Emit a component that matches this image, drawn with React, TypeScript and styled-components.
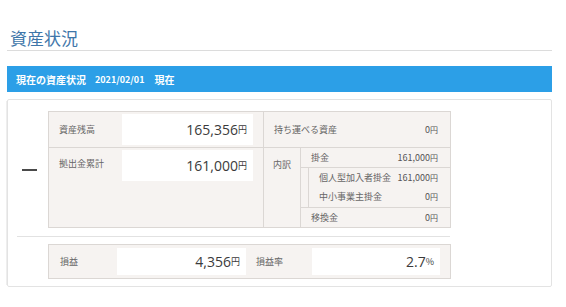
import * as React from "react"
import styled, { createGlobalStyle } from "styled-components"

const GlobalStyle = createGlobalStyle`
  body {
    margin: 0;
    background: #fff;
    font-family: "Noto Sans CJK JP", "Noto Sans", sans-serif;
  }
`

const Page = styled.div`
  width: 545px;
  padding: 26px 0 0 7px;
`

const Title = styled.h1`
  margin: 0 0 15px;
  padding-left: 3px;
  font-size: 17px;
  font-weight: normal;
  line-height: 24px;
  color: #3e76a9;
  border-bottom: 1px solid #dcdcdc;
`

const Bar = styled.div`
  display: flex;
  align-items: center;
  height: 26px;
  padding-left: 9px;
  background: #2c9fe7;
  color: #fff;
  font-size: 10px;
  font-weight: bold;
`

const BarItem = styled.span<{ $gap?: number; $size?: number }>`
  margin-left: ${p => p.$gap || 0}px;
  font-size: ${p => p.$size ?? 10}px;
`

const Panel = styled.div`
  margin-top: 7px;
  padding: 11px 100px 7px 0;
  border: 1px solid #e3e3e3;
  border-radius: 2px;
  box-shadow: -3px 0 0 -2px #eee;
`

const TopRow = styled.div`
  display: flex;
`

// collapse toggle: a short dark bar left of the balance table
const Toggle = styled.div`
  width: 40px;
  display: flex;
  align-items: center;
  justify-content: center;
  padding-left: 3px;
  box-sizing: border-box;

  &::before {
    content: "";
    width: 15px;
    height: 2px;
    background: #4a4a4a;
  }
`

const Table = styled.div`
  box-sizing: border-box;
  width: 403px;
  display: flex;
  border: 1px solid #dbd7d4;
  background: #f6f3f1;
  color: #666;
  font-size: 9px;
`

const LeftPart = styled.div`
  width: 214px;
  display: flex;
  flex-direction: column;
  border-right: 1px solid #dbd7d4;
`

const RightPart = styled.div`
  flex: 1;
  display: flex;
  flex-direction: column;
`

const Line = styled.div<{ $h?: number; $last?: boolean }>`
  display: flex;
  align-items: ${p => (p.$h ? "center" : "flex-start")};
  height: ${p => (p.$h ? `${p.$h}px` : "auto")};
  flex: ${p => (p.$h ? "none" : 1)};
  border-bottom: ${p => (p.$last ? "none" : "1px solid #dbd7d4")};
`

const Label = styled.div<{ $w?: number; $pad?: number }>`
  width: ${p => (p.$w ? `${p.$w}px` : "auto")};
  flex: ${p => (p.$w ? "none" : 1)};
  padding-left: ${p => p.$pad ?? 10}px;
  box-sizing: border-box;
  line-height: 31px;
  white-space: nowrap;
`

const ValueBox = styled.div<{ $w: number; $m?: number }>`
  width: ${p => p.$w}px;
  height: ${p => 35 - (p.$m ?? 2) * 2}px;
  margin: ${p => p.$m ?? 2}px 0;
  box-sizing: border-box;
  background: #fff;
  display: flex;
  align-items: center;
  justify-content: flex-end;
  padding-right: 6px;
  color: #3b3b3b;
`

const Big = styled.span`
  font-family: "Open Sans", "Noto Sans CJK JP", sans-serif;
  font-size: 14px;
`

const Yen = styled.span<{ $size?: number }>`
  font-size: ${p => p.$size ?? 9}px;
`

const Small = styled.div`
  padding-right: 12px;
  color: #555;
  white-space: nowrap;
`

const Breakdown = styled.div`
  flex: 1;
  display: flex;
`

const BreakdownHead = styled.div`
  width: 36px;
  border-right: 1px solid #dbd7d4;
  padding-top: 10px;
  text-align: center;
`

const SubTable = styled.div`
  flex: 1;
  display: flex;
  flex-direction: column;
`

const SubRow = styled.div<{ $h: number; $last?: boolean }>`
  height: ${p => p.$h}px;
  display: flex;
  align-items: center;
  justify-content: space-between;
  padding-left: 10px;
  border-bottom: ${p => (p.$last ? "none" : "1px solid #dbd7d4")};
`

const Group = styled.div`
  height: 39px;
  display: flex;
  border-bottom: 1px solid #dbd7d4;
`

const GroupBody = styled.div`
  flex: 1;
  margin-left: 7px;
  border-left: 1px solid #dbd7d4;
  display: flex;
  flex-direction: column;
`

const GroupRow = styled.div<{ $h: number }>`
  height: ${p => p.$h}px;
  display: flex;
  align-items: center;
  justify-content: space-between;
  padding-left: 10px;
`

const Divider = styled.div`
  width: 433px;
  height: 1px;
  margin: 8px 0 7px 9px;
  background: #e2e2e2;
`

const BottomRow = styled.div`
  margin-left: 40px;
`

const ProfitTable = styled(Table)`
  height: 35px;
  align-items: center;
`

const Spacer = styled.div<{ $w: number }>`
  width: ${p => p.$w}px;
`

const yen = (n: string) => (
  <Small>
    {n}
    <Yen $size={8}>円</Yen>
  </Small>
)

export default function App() {
  return (
    <Page>
      <GlobalStyle />
      <Title>資産状況</Title>
      <Bar>
        <BarItem>現在の資産状況</BarItem>
        <BarItem $gap={9} $size={9}>2021/02/01</BarItem>
        <BarItem $gap={10}>現在</BarItem>
      </Bar>
      <Panel>
        <TopRow>
          <Toggle />
          <Table>
            <LeftPart>
              <Line $h={35}>
                <Label $w={73}>資産残高</Label>
                <ValueBox $w={131}>
                  <Big>165,356</Big>
                  <Yen>円</Yen>
                </ValueBox>
              </Line>
              <Line $last>
                <Label $w={73}>拠出金累計</Label>
                <ValueBox $w={131}>
                  <Big>161,000</Big>
                  <Yen>円</Yen>
                </ValueBox>
              </Line>
            </LeftPart>
            <RightPart>
              <Line $h={35}>
                <Label>持ち運べる資産</Label>
                {yen("0")}
              </Line>
              <Breakdown>
                <BreakdownHead>内訳</BreakdownHead>
                <SubTable>
                  <SubRow $h={19}>
                    <span>掛金</span>
                    {yen("161,000")}
                  </SubRow>
                  <Group>
                    <GroupBody>
                      <GroupRow $h={18}>
                        <span>個人型加入者掛金</span>
                        {yen("161,000")}
                      </GroupRow>
                      <GroupRow $h={21}>
                        <span>中小事業主掛金</span>
                        {yen("0")}
                      </GroupRow>
                    </GroupBody>
                  </Group>
                  <SubRow $h={19} $last>
                    <span>移換金</span>
                    {yen("0")}
                  </SubRow>
                </SubTable>
              </Breakdown>
            </RightPart>
          </Table>
        </TopRow>
        <Divider />
        <BottomRow>
          <ProfitTable>
            <Label $w={68} $pad={11}>損益</Label>
            <ValueBox $w={129} $m={4}>
              <Big>4,356</Big>
              <Yen>円</Yen>
            </ValueBox>
            <Label $w={66}>損益率</Label>
            <ValueBox $w={128} $m={4}>
              <Big>2.7</Big>
              <Yen>%</Yen>
            </ValueBox>
            <Spacer $w={10} />
          </ProfitTable>
        </BottomRow>
      </Panel>
    </Page>
  )
}
